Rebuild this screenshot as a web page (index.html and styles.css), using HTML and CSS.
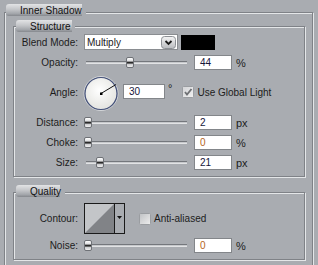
FILE: index.html
```html
<!DOCTYPE html>
<html lang="en">
  <head>
    <meta charset="UTF-8" />
    <title>Inner Shadow</title>
    <link rel="stylesheet" href="styles.css">
  </head>
  <body>
    <div class="group outer">
      <div class="legend"><span class="tab tab-main">Inner Shadow</span></div>

      <div class="group inner">
        <div class="legend"><span class="tab tab-sub">Structure</span></div>

        <div class="row blend">
          <div class="label">Blend Mode:</div>
          <div class="select">
            <span>Multiply</span>
            <svg class="drop" width="15" height="13" viewBox="0 0 15 13">
              <defs>
                <linearGradient id="btn" x1="0" y1="0" x2="0" y2="1">
                  <stop offset="0" stop-color="#f4f4f4" />
                  <stop offset="1" stop-color="#b9bbbf" />
                </linearGradient>
              </defs>
              <rect x="0.5" y="0.5" width="14" height="12" rx="3" fill="url(#btn)" stroke="#8d9095" />
              <path d="M4.5 5 L7.5 8 L10.5 5" fill="none" stroke="#1a1a1a" stroke-width="1.8" />
            </svg>
          </div>
          <div class="swatch"></div>
        </div>

        <div class="row opacity">
          <div class="label">Opacity:</div>
          <div class="slider"><div class="track"></div><div class="thumb" style="left: 42px"></div></div>
          <div class="num">44</div>
          <div class="unit">%</div>
        </div>

        <div class="row angle">
          <div class="label">Angle:</div>
          <svg class="dial" width="36" height="36" viewBox="0 0 36 36">
            <defs>
              <radialGradient id="face" cx="0.45" cy="0.4" r="0.6">
                <stop offset="0" stop-color="#ffffff" />
                <stop offset="1" stop-color="#e4e4e0" />
              </radialGradient>
            </defs>
            <circle cx="18" cy="17.5" r="17" fill="none" stroke="#d4d6d9" />
            <circle cx="18" cy="17.5" r="16" fill="url(#face)" stroke="#44517a" stroke-width="1.2" />
            <line x1="18" y1="17.5" x2="33" y2="8.5" stroke="#111" stroke-width="1" />
            <rect x="17" y="16.5" width="2.5" height="2.5" fill="#000" />
          </svg>
          <div class="num wide">30</div>
          <div class="deg">°</div>
          <svg class="check" width="12" height="12" viewBox="0 0 12 12">
            <defs>
              <linearGradient id="chk" x1="0" y1="0" x2="1" y2="1">
                <stop offset="0" stop-color="#d2d3d6" />
                <stop offset="1" stop-color="#f2f2f2" />
              </linearGradient>
            </defs>
            <rect x="0.5" y="0.5" width="11" height="11" rx="1" fill="url(#chk)" stroke="#9a9da1" />
            <path d="M3 6 L5 8.5 L9.5 3" fill="none" stroke="#6e7074" stroke-width="1.8" />
          </svg>
          <div class="check-text">Use Global Light</div>
        </div>

        <div class="row">
          <div class="label">Distance:</div>
          <div class="slider"><div class="track"></div><div class="thumb" style="left: 0px"></div></div>
          <div class="num">2</div>
          <div class="unit">px</div>
        </div>

        <div class="row">
          <div class="label">Choke:</div>
          <div class="slider"><div class="track"></div><div class="thumb" style="left: 0px"></div></div>
          <div class="num zero">0</div>
          <div class="unit">%</div>
        </div>

        <div class="row">
          <div class="label">Size:</div>
          <div class="slider"><div class="track"></div><div class="thumb" style="left: 12px"></div></div>
          <div class="num">21</div>
          <div class="unit">px</div>
        </div>
      </div>

      <div class="group inner quality">
        <div class="legend"><span class="tab tab-sub">Quality</span></div>

        <div class="row contour">
          <div class="label">Contour:</div>
          <svg class="curve" width="41" height="31" viewBox="0 0 41 31">
            <rect x="0" y="0" width="41" height="31" fill="#1a1a1a" />
            <rect x="1" y="1" width="29" height="29" fill="#c3c5c8" />
            <polygon points="1,30 30,1 30,30" fill="#818387" />
            <rect x="31" y="1" width="9" height="29" fill="#a9acb1" />
            <polygon points="33,13 38,13 35.5,16" fill="#111" />
          </svg>
          <svg class="check off" width="12" height="12" viewBox="0 0 12 12">
            <defs>
              <linearGradient id="chk2" x1="0" y1="0" x2="1" y2="1">
                <stop offset="0" stop-color="#bfc1c4" />
                <stop offset="1" stop-color="#eeeeee" />
              </linearGradient>
            </defs>
            <rect x="0.5" y="0.5" width="11" height="11" rx="1" fill="url(#chk2)" stroke="#9a9da1" />
          </svg>
          <div class="check-text">Anti-aliased</div>
        </div>

        <div class="row">
          <div class="label">Noise:</div>
          <div class="slider"><div class="track"></div><div class="thumb" style="left: 0px"></div></div>
          <div class="num zero">0</div>
          <div class="unit">%</div>
        </div>
      </div>
    </div>
  </body>
</html>
```

FILE: styles.css
```css
body {
  margin: 0;
  background-color: #a9acb1;
  font-family: "Liberation Sans", Arial, sans-serif;
  font-size: 10px;
  color: #1c1c1c;
  height: 290px;
}

.group {
  border: 1px solid #7f8287;
  box-shadow: inset 1px 1px 0 #e4e6e8, 1px 1px 0 #e4e6e8;
}

.outer {
  margin: 12px 5px 0 4px;
  padding-bottom: 20px;
}

.inner {
  margin: 10px 7px 0 8px;
  padding-bottom: 6px;
}

.quality {
  margin-top: 15px;
  padding-bottom: 6px;
}

.legend {
  height: 12px;
  margin-top: -7px;
}

.outer > .legend {
  margin-top: -9px;
}

.quality > .legend {
  margin-top: -8px;
}

.tab {
  display: inline-block;
  height: 12px;
  line-height: 13px;
  padding: 0 4px 0 14px;
  background-color: #a9acb1;
  background-image: linear-gradient(#e2e3e5, #c4c6c9 45%, #a3a6ab 80%, #85888d);
  background-repeat: no-repeat;
  border-radius: 3px 0 0 3px;
  color: #111;
}

.tab-main {
  margin-left: 1px;
  background-size: 76px 12px;
}

.tab-sub {
  margin-left: 2px;
  background-size: 44px 12px;
}

.inner > .legend .tab-sub {
  background-size: 56px 12px;
}

.quality > .legend .tab-sub {
  background-size: 44px 12px;
}

.row {
  display: flex;
  align-items: center;
  height: 15px;
  margin-top: 5px;
}

.label {
  width: 64px;
  flex: none;
  text-align: right;
}

.blend {
  height: 16px;
  margin-top: 2px;
}

.select {
  width: 94px;
  height: 16px;
  box-sizing: border-box;
  margin-left: 6px;
  background: #fff;
  border: 1px solid #8a8d91;
  display: flex;
  align-items: center;
  justify-content: space-between;
  padding: 0 1px 0 2px;
}

.swatch {
  width: 34px;
  height: 15px;
  margin-left: 3px;
  background: #000;
}

.opacity {
  height: 15px;
}

.slider {
  position: relative;
  width: 104px;
  height: 15px;
  margin-left: 6px;
  display: flex;
  align-items: center;
}

.track {
  width: 101px;
  height: 1px;
  margin-left: 2px;
  background: #c7c9cc;
  border-top: 1px solid #74777c;
  border-bottom: 1px solid #e2e3e5;
}

.thumb {
  position: absolute;
  top: 2px;
  width: 6px;
  height: 9px;
  border: 1px solid #6f7277;
  border-radius: 2px;
  background: linear-gradient(#ffffff, #dcdddf 35%, #2a2a2a 45%, #2a2a2a 58%, #c9cacd 66%, #f0f0f0);
}

.num {
  width: 38px;
  height: 15px;
  box-sizing: border-box;
  margin-left: 6px;
  background: #fff;
  border: 1px solid #83868a;
  padding-left: 5px;
  line-height: 13px;
  color: #16163a;
}

.num.zero {
  color: #b4661c;
}

.unit {
  margin-left: 4px;
  font-size: 11px;
}

.angle {
  height: 36px;
  align-items: flex-start;
  margin-top: 6px;
}

.angle .label {
  margin-top: 11px;
}

.dial {
  margin-left: 5px;
}

.num.wide {
  width: 42px;
  margin-left: 4px;
  margin-top: 8px;
}

.deg {
  margin-left: 3px;
  margin-top: 6px;
  font-size: 11px;
}

.check {
  margin-left: 10px;
  margin-top: 10px;
  flex: none;
}

.angle .check-text {
  margin-top: 11px;
}

.check-text {
  margin-left: 3px;
}

.angle + .row {
  margin-top: 3px;
}

.contour {
  height: 31px;
  margin-top: 6px;
}

.curve {
  margin-left: 6px;
}

.check.off {
  margin: 0 0 0 14px;
}

.contour + .row {
  margin-top: 4px;
}
```
